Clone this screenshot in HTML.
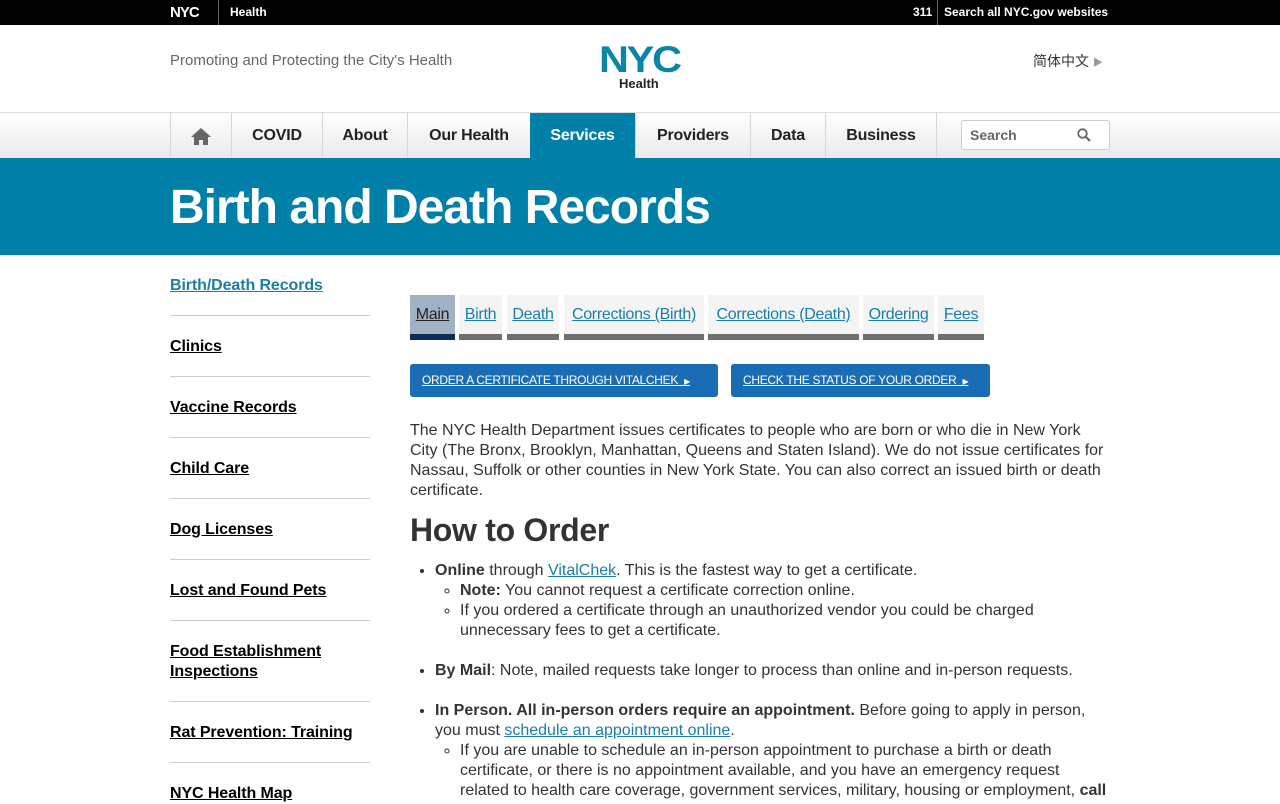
<!DOCTYPE html>
<html><head><meta charset="utf-8"><style>
*{margin:0;padding:0;box-sizing:border-box}
body{width:1280px;height:800px;overflow:hidden;font-family:"Liberation Sans",Arial,sans-serif;color:#333;background:#fff;position:relative}
.abs{position:absolute}
.top{left:0;top:0;width:1280px;height:25px;background:#000;color:#fff;font-weight:bold;font-size:12px}
.nav{left:0;top:112px;width:1280px;height:46px;background:linear-gradient(#fff,#e9e9e9);border-top:1px solid #ddd}
.nav div{position:absolute;top:0;height:46px;line-height:46px;text-align:center;font-weight:bold;font-size:16px;color:#222;border-left:1px solid #d6d6d6;letter-spacing:-0.2px}
.banner{left:0;top:158px;width:1280px;height:97px;background:#0080a9;color:#fff;font-weight:bold;font-size:48px;letter-spacing:-1px}
.side a{position:absolute;left:170px;width:200px;color:#000;font-weight:bold;font-size:16px;text-decoration:underline;line-height:20px;letter-spacing:-0.1px}
.side hr{position:absolute;left:170px;width:200px;border:0;border-top:1px solid #ccc}
.tab{position:absolute;top:295px;background:#f4f4f4;border-bottom:6px solid #6f6f6f;font-size:16px;color:#1a7ea6;text-decoration:underline;line-height:40px;text-align:center;height:45px;letter-spacing:-0.3px}
.btn{position:absolute;top:364px;height:33px;background:#1a6db5;border-radius:3px;color:#fff;font-size:12px;text-decoration:underline;line-height:33px;padding-left:12px;letter-spacing:-.3px}
.c{font-size:16px;line-height:20px;color:#333}
a.l{color:#1a7ea6;text-decoration:underline}
ul{position:absolute;left:435px;width:680px}
</style></head><body>
<div class="abs top">
<span class="abs" style="left:170px;top:4px;font-size:15px;font-weight:900;letter-spacing:-1px">NYC</span>
<span class="abs" style="left:218px;top:0;height:25px;border-left:1px solid #666"></span>
<span class="abs" style="left:230px;top:5px">Health</span>
<span class="abs" style="left:913px;top:5px">311</span>
<span class="abs" style="left:937px;top:0;height:25px;border-left:1px solid #666"></span>
<span class="abs" style="left:944px;top:5px">Search all NYC.gov websites</span>
</div>
<div class="abs" style="left:170px;top:52px;font-size:15px;color:#666">Promoting and Protecting the City's Health</div>
<div class="abs" style="left:599px;top:40px;font-size:37px;font-weight:900;color:#0a85a8;letter-spacing:-2px;line-height:40px;transform:scaleX(1.12);transform-origin:left">NYC</div>
<div class="abs" style="left:619px;top:76px;font-size:13px;font-weight:bold;color:#222">Health</div>
<div class="abs" style="left:1033px;top:51px;font-size:14px;color:#333;font-family:'Liberation Sans','Noto Sans CJK SC',sans-serif">简体中文 <span style="color:#999;font-size:10px">▶</span></div>
<div class="abs nav">
<div style="left:170px;width:61px"><svg style="margin-top:15px" width="20" height="17" viewBox="0 0 20 17"><path d="M10 0L0 9h3v8h5v-5h4v5h5V9h3z" fill="#666"/></svg></div>
<div style="left:231px;width:91px">COVID</div>
<div style="left:322px;width:85px">About</div>
<div style="left:407px;width:123px">Our Health</div>
<div style="left:530px;width:105px;background:#0080a9;color:#fff;border:0">Services</div>
<div style="left:635px;width:115px">Providers</div>
<div style="left:750px;width:75px">Data</div>
<div style="left:825px;width:111px">Business</div>
<div style="left:936px;width:1px"></div>
<span class="abs" style="left:961px;top:7px;width:149px;height:30px;background:#fff;border:1px solid #ccc;border-radius:3px;font-size:14px;font-weight:bold;color:#666;line-height:28px;padding-left:8px">Search<svg style="position:absolute;right:18px;top:7px" width="14" height="14" viewBox="0 0 14 14"><circle cx="5.5" cy="5.5" r="4.3" fill="none" stroke="#666" stroke-width="1.8"/><path d="M8.5 8.5L13 13" stroke="#666" stroke-width="2.2"/></svg></span>
</div>
<div class="abs banner"><span class="abs" style="left:170px;top:22px">Birth and Death Records</span></div>
<div class="side">
<a style="top:276px;color:#1a7ea6">Birth/Death Records</a><hr style="top:315px">
<a style="top:337px">Clinics</a><hr style="top:376px">
<a style="top:398px">Vaccine Records</a><hr style="top:437px">
<a style="top:459px">Child Care</a><hr style="top:498px">
<a style="top:520px">Dog Licenses</a><hr style="top:559px">
<a style="top:581px">Lost and Found Pets</a><hr style="top:620px">
<a style="top:642px">Food Establishment<br>Inspections</a><hr style="top:701px">
<a style="top:723px">Rat Prevention: Training</a><hr style="top:762px">
<a style="top:784px">NYC Health Map</a>
</div>
<div class="tab" style="left:410px;width:45px;background:#9fb3c5;color:#222;border-bottom-color:#0c2d5a">Main</div>
<div class="tab" style="left:459px;width:43px">Birth</div>
<div class="tab" style="left:507px;width:52px">Death</div>
<div class="tab" style="left:564px;width:140px">Corrections (Birth)</div>
<div class="tab" style="left:708px;width:151px">Corrections (Death)</div>
<div class="tab" style="left:863px;width:71px">Ordering</div>
<div class="tab" style="left:938px;width:46px">Fees</div>
<div class="btn" style="left:410px;width:308px">ORDER A CERTIFICATE THROUGH VITALCHEK &nbsp;<span style="font-size:8px">▶</span></div>
<div class="btn" style="left:731px;width:259px">CHECK THE STATUS OF YOUR ORDER &nbsp;<span style="font-size:8px">▶</span></div>
<p class="abs c" style="left:410px;top:421px;width:700px">The NYC Health Department issues certificates to people who are born or who die in New York City (The Bronx, Brooklyn, Manhattan, Queens and Staten Island). We do not issue certificates for Nassau, Suffolk or other counties in New York State. You can also correct an issued birth or death certificate.</p>
<div class="abs" style="left:410px;top:512px;font-size:32px;font-weight:bold;color:#333;letter-spacing:-0.3px">How to Order</div>
<ul class="c" style="top:561px">
<li><b>Online</b> through <a class="l">VitalChek</a>. This is the fastest way to get a certificate.
<ul style="position:static;list-style:circle;padding-left:25px;width:auto"><li><b>Note:</b> You cannot request a certificate correction online.</li><li>If you ordered a certificate through an unauthorized vendor you could be charged unnecessary fees to get a certificate.</li></ul><br></li>
<li><b>By Mail</b>: Note, mailed requests take longer to process than online and in-person requests.<br><br></li>
<li><b>In Person. All in-person orders require an appointment.</b> Before going to apply in person, you must <a class="l">schedule an appointment online</a>.
<ul style="position:static;list-style:circle;padding-left:25px;width:675px"><li>If you are unable to schedule an in-person appointment to purchase a birth or death certificate, or there is no appointment available, and you have an emergency request related to health care coverage, government services, military, housing or employment, <b>call</b></li></ul></li>
</ul>
</body></html>
